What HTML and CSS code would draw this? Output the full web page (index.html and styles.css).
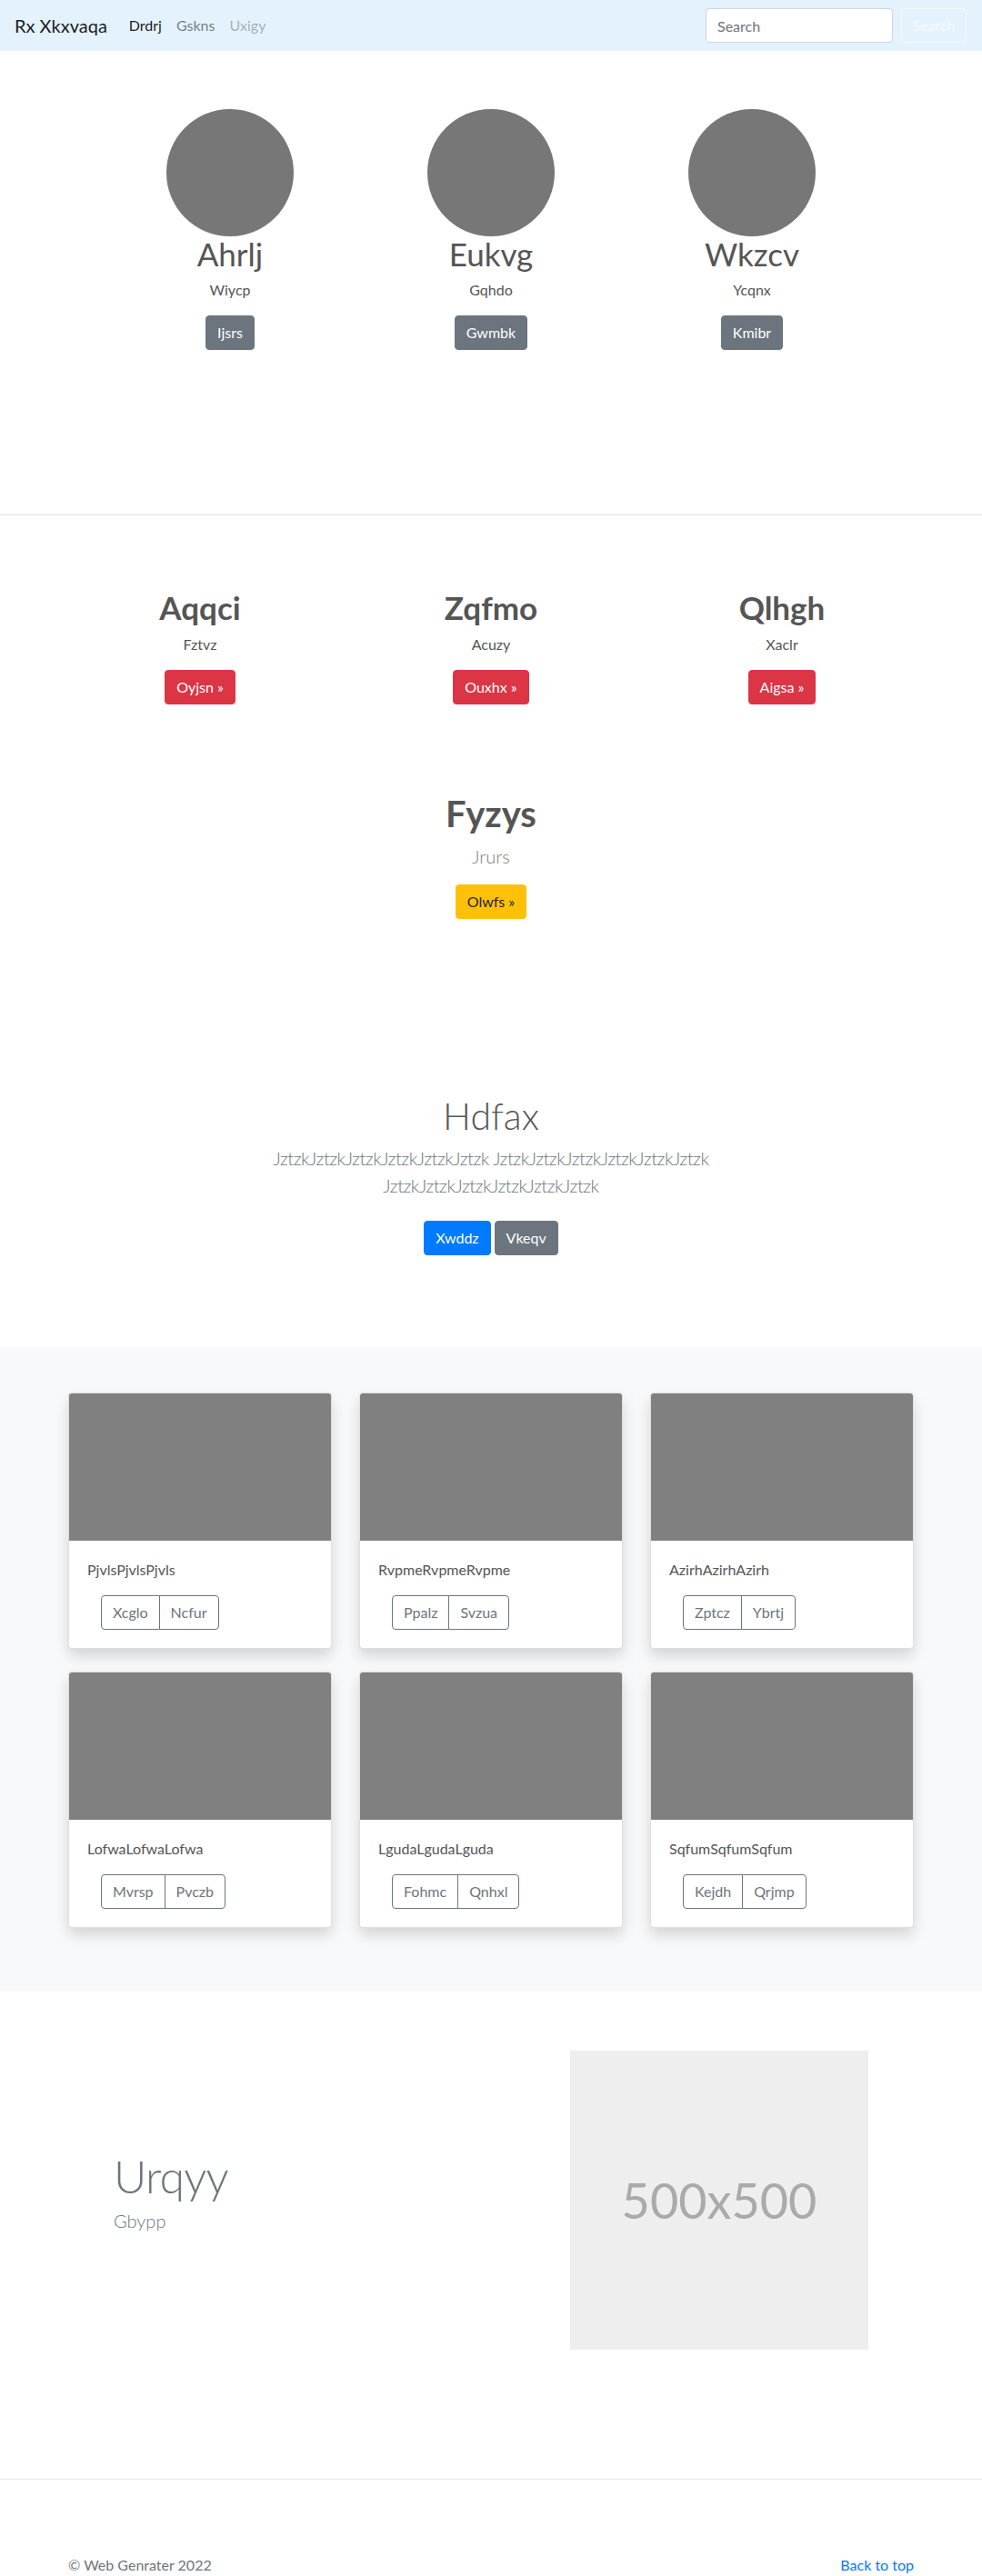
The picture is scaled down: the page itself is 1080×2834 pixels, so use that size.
FILE: index.html
```html
<!DOCTYPE html>
<html lang="en">
<head>
<meta charset="utf-8">
<title>Rx Xkxvaqa</title>
<link rel="stylesheet" href="styles.css">
</head>
<body>
<nav class="navbar">
  <a class="brand" href="#">Rx Xkxvaqa</a>
  <ul class="nav-links">
    <li class="nav-item active"><a href="#">Drdrj</a></li>
    <li class="nav-item"><a href="#">Gskns</a></li>
    <li class="nav-item disabled"><a href="#">Uxigy</a></li>
  </ul>
  <form class="search">
    <input class="search-input" type="text" placeholder="Search">
    <button class="search-btn" type="button">Search</button>
  </form>
</nav>

<section class="marketing">
  <div class="marketing-row">
    <div class="marketing-col">
      <div class="avatar"></div>
      <h2 class="marketing-title">Ahrlj</h2>
      <p class="marketing-text">Wiycp</p>
      <a class="btn btn-secondary" href="#">Ijsrs</a>
    </div>
    <div class="marketing-col">
      <div class="avatar"></div>
      <h2 class="marketing-title">Eukvg</h2>
      <p class="marketing-text">Gqhdo</p>
      <a class="btn btn-secondary" href="#">Gwmbk</a>
    </div>
    <div class="marketing-col">
      <div class="avatar"></div>
      <h2 class="marketing-title">Wkzcv</h2>
      <p class="marketing-text">Ycqnx</p>
      <a class="btn btn-secondary" href="#">Kmibr</a>
    </div>
  </div>
</section>

<hr class="divider">

<section class="features">
  <div class="features-row">
    <div class="feature-col">
      <h2 class="feature-title">Aqqci</h2>
      <p class="feature-text">Fztvz</p>
      <a class="btn btn-danger" href="#">Oyjsn &raquo;</a>
    </div>
    <div class="feature-col">
      <h2 class="feature-title">Zqfmo</h2>
      <p class="feature-text">Acuzy</p>
      <a class="btn btn-danger" href="#">Ouxhx &raquo;</a>
    </div>
    <div class="feature-col">
      <h2 class="feature-title">Qlhgh</h2>
      <p class="feature-text">Xaclr</p>
      <a class="btn btn-danger" href="#">Aigsa &raquo;</a>
    </div>
  </div>
  <div class="feature-main">
    <h1 class="feature-main-title">Fyzys</h1>
    <p class="feature-main-lead">Jrurs</p>
    <a class="btn btn-warning" href="#">Olwfs &raquo;</a>
  </div>
</section>

<section class="hero">
  <h1 class="hero-title">Hdfax</h1>
  <p class="hero-lead">JztzkJztzkJztzkJztzkJztzkJztzk JztzkJztzkJztzkJztzkJztzkJztzk JztzkJztzkJztzkJztzkJztzkJztzk</p>
  <div class="hero-actions">
    <a class="btn btn-primary" href="#">Xwddz</a>
    <a class="btn btn-secondary" href="#">Vkeqv</a>
  </div>
</section>

<section class="album">
  <div class="album-grid">
    <div class="card">
      <div class="card-img"></div>
      <div class="card-body">
        <p class="card-text">PjvlsPjvlsPjvls</p>
        <div class="btn-group"><a class="btn-outline" href="#">Xcglo</a><a class="btn-outline" href="#">Ncfur</a></div>
      </div>
    </div>
    <div class="card">
      <div class="card-img"></div>
      <div class="card-body">
        <p class="card-text">RvpmeRvpmeRvpme</p>
        <div class="btn-group"><a class="btn-outline" href="#">Ppalz</a><a class="btn-outline" href="#">Svzua</a></div>
      </div>
    </div>
    <div class="card">
      <div class="card-img"></div>
      <div class="card-body">
        <p class="card-text">AzirhAzirhAzirh</p>
        <div class="btn-group"><a class="btn-outline" href="#">Zptcz</a><a class="btn-outline" href="#">Ybrtj</a></div>
      </div>
    </div>
    <div class="card">
      <div class="card-img"></div>
      <div class="card-body">
        <p class="card-text">LofwaLofwaLofwa</p>
        <div class="btn-group"><a class="btn-outline" href="#">Mvrsp</a><a class="btn-outline" href="#">Pvczb</a></div>
      </div>
    </div>
    <div class="card">
      <div class="card-img"></div>
      <div class="card-body">
        <p class="card-text">LgudaLgudaLguda</p>
        <div class="btn-group"><a class="btn-outline" href="#">Fohmc</a><a class="btn-outline" href="#">Qnhxl</a></div>
      </div>
    </div>
    <div class="card">
      <div class="card-img"></div>
      <div class="card-body">
        <p class="card-text">SqfumSqfumSqfum</p>
        <div class="btn-group"><a class="btn-outline" href="#">Kejdh</a><a class="btn-outline" href="#">Qrjmp</a></div>
      </div>
    </div>
  </div>
</section>

<section class="featurette">
  <div class="featurette-text">
    <h2 class="featurette-heading">Urqyy</h2>
    <p class="featurette-lead">Gbypp</p>
  </div>
  <div class="placeholder-img"><span>500x500</span></div>
</section>

<hr class="divider">

<footer class="footer">
  <p class="copyright">&copy; Web Genrater 2022</p>
  <a class="back-top" href="#">Back to top</a>
</footer>
</body>
</html>
```

FILE: styles.css
```css
* { box-sizing: border-box; }

html, body {
  margin: 0;
  padding: 0;
}

body {
  font-family: Lato, "Open Sans", "Noto Sans", sans-serif;
  font-size: 16px;
  line-height: 1.5;
  color: #555;
  background: #fff;
}

a { text-decoration: none; }

h1, h2, p { margin: 0; }

/* Navbar */
.navbar {
  height: 56px;
  background: #e3f2fd;
  display: flex;
  align-items: center;
  padding: 0 17px 0 16px;
}

.brand {
  font-size: 20px;
  line-height: 30px;
  color: rgba(0, 0, 0, 0.9);
  margin-right: 16px;
}

.nav-links {
  list-style: none;
  margin: 0;
  padding: 0;
  display: flex;
  flex: 1;
}

.nav-item a {
  display: block;
  padding: 8px;
  color: rgba(0, 0, 0, 0.5);
}

.nav-item.active a { color: rgba(0, 0, 0, 0.9); }
.nav-item.disabled a { color: rgba(0, 0, 0, 0.3); }

.search {
  display: flex;
  align-items: center;
}

.search-input {
  width: 206px;
  height: 38px;
  padding: 6px 12px;
  font: inherit;
  font-size: 16px;
  color: #495057;
  background: #fff;
  border: 1px solid #ced4da;
  border-radius: 4px;
  margin-right: 9px;
}

.search-input::placeholder { color: #6c757d; }

.search-btn {
  width: 72px;
  height: 38px;
  font: inherit;
  font-size: 16px;
  color: #f8f9fa;
  background: transparent;
  border: 1px solid #f8f9fa;
  border-radius: 4px;
  padding: 0;
}

/* Buttons */
.btn {
  display: inline-block;
  font-size: 16px;
  line-height: 24px;
  padding: 6px 12px;
  border: 1px solid transparent;
  border-radius: 4px;
  color: #fff;
  vertical-align: middle;
}

.btn-secondary { background: #6c757d; border-color: #6c757d; }
.btn-danger { background: #dc3545; border-color: #dc3545; }
.btn-warning { background: #ffc107; border-color: #ffc107; color: #212529; }
.btn-primary { background: #007bff; border-color: #007bff; }

/* Marketing */
.marketing {
  padding: 64px 0 181px;
}

.marketing-row {
  width: 861px;
  margin: 0 auto;
  display: grid;
  grid-template-columns: repeat(3, 1fr);
}

.marketing-col {
  text-align: center;
}

.avatar {
  width: 140px;
  height: 140px;
  border-radius: 50%;
  background: #777;
  margin: 0 auto;
}

.marketing-title {
  font-size: 35px;
  font-weight: 400;
  line-height: 1.1;
  margin-bottom: 8px;
  color: #555;
}

.marketing-text {
  margin-bottom: 16px;
}

.divider {
  margin: 0;
  border: 0;
  border-top: 1px solid rgba(0, 0, 0, 0.1);
}

/* Features */
.features {
  padding-top: 80px;
}

.features-row {
  width: 960px;
  margin: 0 auto;
  display: grid;
  grid-template-columns: repeat(3, 1fr);
}

.feature-col { text-align: center; }

.feature-title {
  font-size: 35px;
  font-weight: 700;
  line-height: 1.2;
  margin-bottom: 8px;
  color: #555;
}

.feature-text { margin-bottom: 16px; }

.feature-main {
  text-align: center;
  margin-top: 96px;
}

.feature-main-title {
  font-size: 40px;
  font-weight: 700;
  line-height: 1.2;
  margin-bottom: 8px;
  color: #555;
}

.feature-main-lead {
  font-size: 20px;
  font-weight: 300;
  line-height: 30px;
  color: #847d78;
  margin-bottom: 16px;
}

/* Hero */
.hero {
  text-align: center;
  padding: 192px 0 93px;
}

.hero-title {
  font-size: 41px;
  font-weight: 300;
  line-height: 1.2;
  margin-bottom: 7px;
  color: #555;
}

.hero-lead {
  max-width: 600px;
  margin: 0 auto 16px;
  font-size: 20px;
  font-weight: 300;
  line-height: 30px;
  letter-spacing: -0.5px;
  color: #6c757d;
}

.hero-actions {
  padding: 8px 0;
  display: flex;
  justify-content: center;
  gap: 4px;
}

/* Album */
.album {
  background: #f8f9fa;
  padding: 50px 0 70px;
}

.album-grid {
  width: 930px;
  margin: 0 auto;
  display: grid;
  grid-template-columns: repeat(3, 1fr);
  column-gap: 30px;
  row-gap: 25px;
}

.card {
  background: #fff;
  border: 1px solid rgba(0, 0, 0, 0.125);
  border-radius: 4px;
  box-shadow: 0 8px 16px rgba(0, 0, 0, 0.15);
  overflow: hidden;
}

.card-img {
  height: 162px;
  background: #808080;
}

.card-body {
  padding: 20px;
}

.card-text {
  margin-bottom: 16px;
}

.btn-group {
  display: inline-flex;
  margin-left: 15px;
}

.btn-outline {
  display: block;
  font-size: 16px;
  line-height: 24px;
  padding: 6px 12px;
  color: #6c757d;
  border: 1px solid #6c757d;
}

.btn-outline:first-child {
  border-radius: 4px 0 0 4px;
}

.btn-outline + .btn-outline {
  margin-left: -1px;
  border-radius: 0 4px 4px 0;
}

/* Featurette */
.featurette {
  width: 960px;
  margin: 0 auto;
  padding: 65px 65px 142px;
  display: grid;
  grid-template-columns: 1fr 328px;
  align-items: center;
}

.featurette-text {
  padding-bottom: 13px;
}

.featurette-heading {
  font-size: 50px;
  font-weight: 300;
  line-height: 1;
  letter-spacing: -0.8px;
  margin-bottom: 9px;
  color: #6c757d;
}

.featurette-lead {
  font-size: 20px;
  font-weight: 300;
  line-height: 30px;
  color: #6c757d;
}

.placeholder-img {
  width: 328px;
  height: 329px;
  background: #eee;
  display: flex;
  align-items: center;
  justify-content: center;
}

.placeholder-img span {
  font-size: 54px;
  color: #aaa;
}

/* Footer */
.footer {
  width: 930px;
  margin: 0 auto;
  padding: 82px 0 3px;
  display: flex;
  justify-content: space-between;
  align-items: center;
  color: #6c757d;
}

.back-top { color: #007bff; }
```
